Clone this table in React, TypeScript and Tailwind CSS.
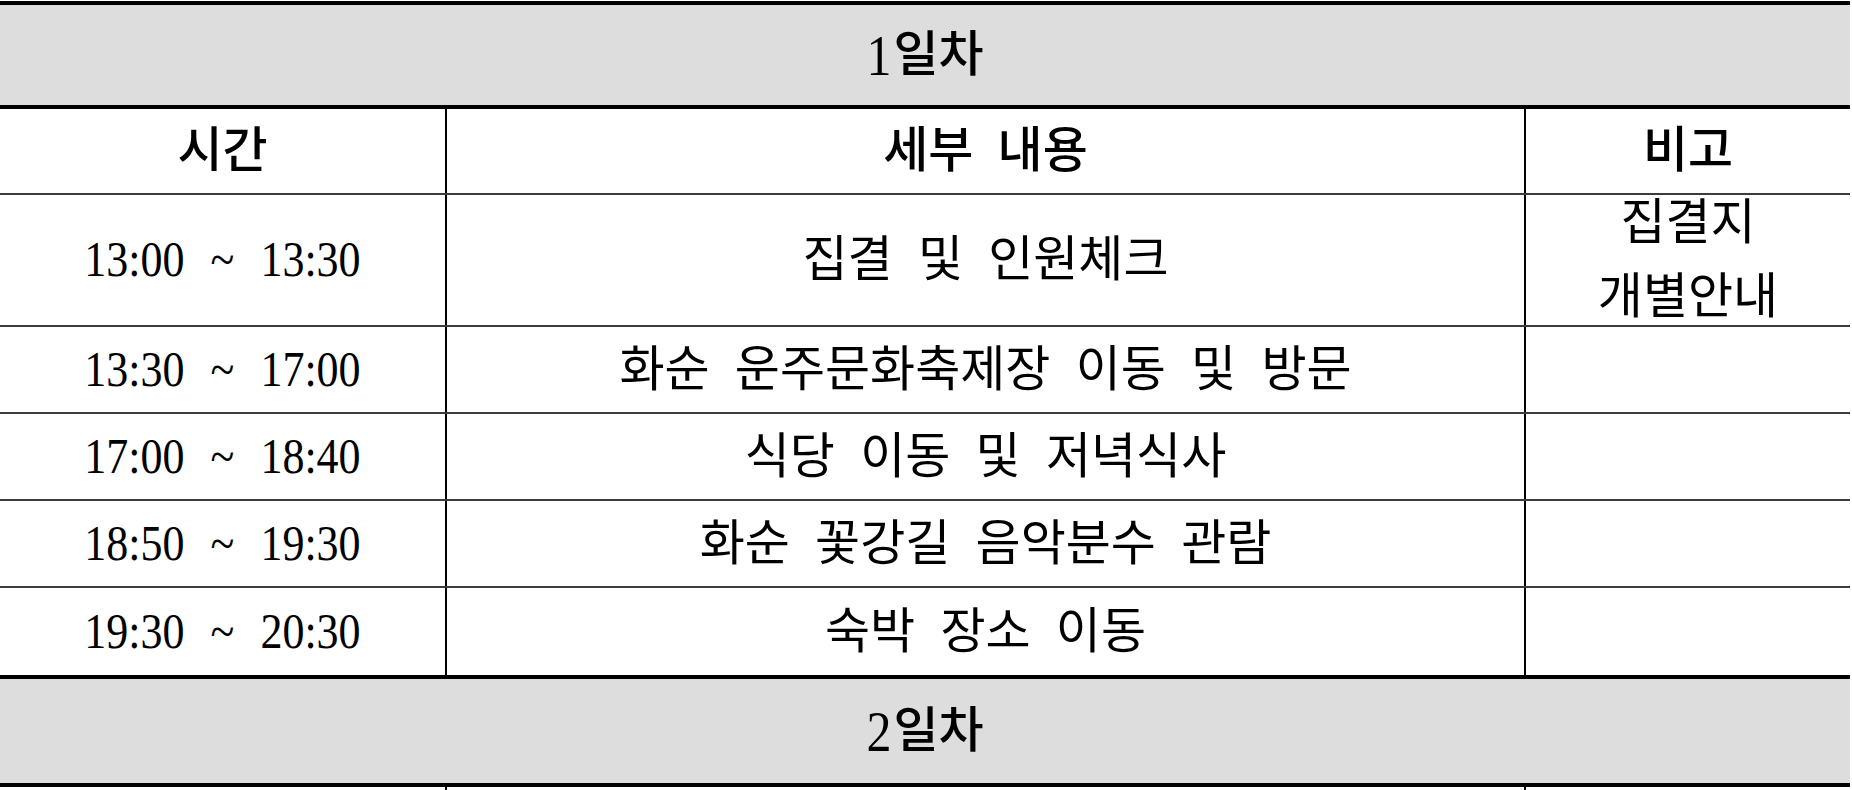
import React from "react";

type Row = { time: string; detail: string; note?: string[] };

const rows: Row[] = [
  { time: "13:00 ~ 13:30", detail: "집결 및 인원체크", note: ["집결지", "개별안내"] },
  { time: "13:30 ~ 17:00", detail: "화순 운주문화축제장 이동 및 방문" },
  { time: "17:00 ~ 18:40", detail: "식당 이동 및 저녁식사" },
  { time: "18:50 ~ 19:30", detail: "화순 꽃강길 음악분수 관람" },
  { time: "19:30 ~ 20:30", detail: "숙박 장소 이동" },
];

function TimeText({ t }: { t: string }) {
  return (
    <span className="inline-block scale-y-[1.15] text-[44px] leading-none [word-spacing:15px] font-['Liberation_Serif',serif]">
      {t}
    </span>
  );
}

function DayBar({ n, h }: { n: string; h: string }) {
  return (
    <div className={`${h} bg-[#dddddd] flex items-center justify-center text-[49px] font-medium`}>
      <span className="inline-block scale-y-[1.15] text-[50px] leading-none font-normal font-['Liberation_Serif',serif] mr-[2px]">
        {n}
      </span>
      <span>일차</span>
    </div>
  );
}

export default function App() {
  return (
    <div className="w-[1852px] h-[790px] overflow-hidden bg-white pt-px text-black font-['Liberation_Serif','Noto_Sans_CJK_KR',serif]">
      <div className="w-[1850px]">
        <div className="h-[4px] bg-black" />
        <DayBar n="1" h="h-[100px]" />
        <div className="h-[4px] bg-black" />

        <div className="grid grid-cols-[447px_1079px_1fr] grid-rows-1 h-[86px] border-b-2 border-[#3c3c3c] text-[49px] font-medium [word-spacing:12px]">
          <div className="flex items-center justify-center border-r-2 border-black">시간</div>
          <div className="flex items-center justify-center border-r-2 border-black">세부 내용</div>
          <div className="flex items-center justify-center">비고</div>
        </div>

        {rows.map((r, i) => (
          <div
            key={r.time}
            className={`grid grid-cols-[447px_1079px_1fr] grid-rows-1 ${i === 0 ? "h-[132px]" : "h-[87px]"} ${
              i === rows.length - 1 ? "" : "border-b-2 border-[#3c3c3c]"
            } text-[49px] [word-spacing:13px]`}
          >
            <div className="flex items-center justify-center border-r-2 border-black">
              <TimeText t={r.time} />
            </div>
            <div className="flex items-center justify-center border-r-2 border-black whitespace-nowrap">
              {r.detail}
            </div>
            <div className="flex min-h-0 flex-col items-center justify-center leading-[74px] whitespace-nowrap">
              {r.note?.map((n) => (
                <span key={n}>{n}</span>
              ))}
            </div>
          </div>
        ))}

        <div className="h-[4px] bg-black" />
        <DayBar n="2" h="h-[104px]" />
        <div className="h-[4px] bg-black" />
        <div className="grid grid-cols-[447px_1079px_1fr] h-[60px]">
          <div className="border-r-2 border-black" />
          <div className="border-r-2 border-black" />
          <div />
        </div>
      </div>
    </div>
  );
}
